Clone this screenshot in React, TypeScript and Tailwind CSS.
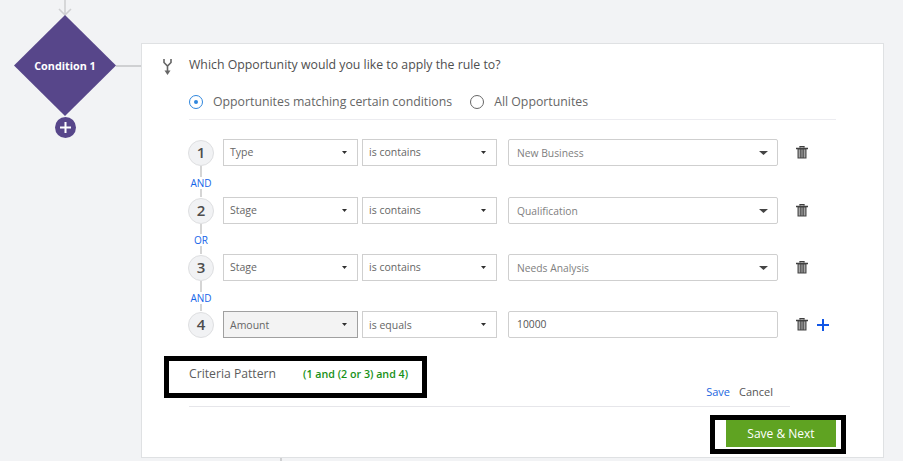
const font = "[font-family:'Open_Sans',sans-serif]";

function Caret({ w = 5, h = 3, fill = "#2f2f2f" }: { w?: number; h?: number; fill?: string }) {
  return (
    <svg width={w} height={h} viewBox="0 0 10 5" preserveAspectRatio="none" className="shrink-0">
      <path d="M0 0h10L5 5z" fill={fill} />
    </svg>
  );
}

function Trash() {
  return (
    <svg width="12" height="13" viewBox="0 0 12 13" className="shrink-0">
      <path d="M4 1.500V.5h4v1M0 2.500h12" stroke="#3f3f3f" strokeWidth="1.3" fill="none" />
      <path d="M1.500 2.500h9v10h-9z" fill="#444" />
      <path d="M2.600 3.500h1.700v8H2.600zM5.400 3.500h1.200v8H5.400zM7.700 3.500h1.700v8H7.700z" fill="#a6a6a6" />
    </svg>
  );
}

function Select({ text, active, low }: { text: string; active?: boolean; low?: boolean }) {
  return (
    <div
      className={`w-[135px] h-full border flex items-center justify-between pl-[6px] pr-[10px] text-[10.5px] text-[#666] ${
        active ? "bg-[#f3f3f3] border-[#a0a0a0]" : "bg-white border-[#cfcfcf]"
      }`}
    >
      <span className={low ? "pt-[2px]" : ""}>{text}</span>
      <Caret />
    </div>
  );
}

function Row({ n, field, op, value, active, plain, plus }: {
  n: number; field: string; op: string; value: string; active?: boolean; plain?: boolean; plus?: boolean;
}) {
  return (
    <div className="flex items-center h-[27px]">
      <div className="w-[26px] h-[26px] rounded-full bg-[#f1f2f4] border border-[#dedfe1] flex items-center justify-center text-[15px] font-semibold text-[#4d4d4d] shrink-0">
        {n}
      </div>
      <div className="ml-[9px] flex gap-[4px] h-full">
        <Select text={field} active={active} low={active} />
        <Select text={op} low={active} />
      </div>
      <div className={`ml-[11px] w-[270px] h-full border border-[#cfcfcf] rounded-[2px] flex items-center justify-between pl-[8px] pr-[9px] text-[10.3px] shrink-0 ${plain ? "text-[#555]" : "text-[#808080]"}`}>
        <span className={plain ? "" : "pt-[2px]"}>{value}</span>
        {!plain && <Caret w={9} h={4} fill="#444" />}
      </div>
      <div className="ml-[18px]"><Trash /></div>
      {plus && (
        <svg width="12" height="12" viewBox="0 0 12 12" className="ml-[9px]">
          <path d="M6 0v12M0 6h12" stroke="#1257e6" strokeWidth="2" />
        </svg>
      )}
    </div>
  );
}

function Joiner({ label, h, top }: { label: string; h: string; top: string }) {
  return (
    <div className={`w-[26px] ${h} flex flex-col items-center`}>
      <div className={`w-[2px] ${top} bg-[#d5d5d5]`} />
      <div className="text-[10px] leading-[12px] font-medium text-[#1565e8]">{label}</div>
      <div className="w-[2px] flex-1 bg-[#d5d5d5]" />
    </div>
  );
}

function Radio({ on }: { on?: boolean }) {
  return (
    <div className={`w-[14px] h-[14px] rounded-full border flex items-center justify-center bg-white shrink-0 ${on ? "border-[#2f86dd]" : "border-[#666]"}`}>
      {on && <div className="w-[4px] h-[4px] rounded-full bg-[#2f86dd]" />}
    </div>
  );
}

export default function App() {
  return (
    <div className={`${font} w-[903px] h-[461px] overflow-hidden bg-[#f2f3f5] flex`}>
      <div className="w-[141px] shrink-0 flex flex-col">
        <div className="ml-[14px] w-[127px] flex items-start">
          <div className="w-[102px] flex flex-col items-center">
            <svg width="14" height="16" viewBox="0 0 14 16" className="-mb-px">
              <path d="M7 0v15M1 9l6 6 6-6" stroke="#cfd0d2" strokeWidth="1.6" fill="none" />
            </svg>
            <div
              className="w-[102px] h-[101px] bg-[#57468a] flex items-center justify-center pt-[1px] text-white text-[10.8px] font-bold [clip-path:polygon(50%_0,100%_50%,50%_100%,0_50%)]"
            >
              Condition 1
            </div>
            <div className="mt-px w-[21px] h-[21px] rounded-full bg-[#57468a] flex items-center justify-center">
              <svg width="11" height="11" viewBox="0 0 11 11">
                <path d="M5.5 0v11M0 5.5h11" stroke="#fff" strokeWidth="2" />
              </svg>
            </div>
          </div>
          <div className="mt-[65px] h-[2px] w-[25px] bg-[#cfd0d2]" />
        </div>
      </div>

      <div className="flex flex-col shrink-0">
        <div className="mt-[43px] w-[743px] h-[415px] bg-white border border-[#dfe1e3] pt-[11px] pl-[20px] pr-[37px] flex flex-col shrink-0">
          <div className="flex items-center h-[20px]">
            <svg width="9" height="16" viewBox="0 0 9 16" className="ml-[1px] mr-[17px] mt-[4px] shrink-0">
              <path d="M1 0v3.500l3.500 3.500L8 3.500V0M4.500 7V12" stroke="#666" strokeWidth="1.600" fill="none" />
              <path d="M1.500 11.500h6l-3 4.500z" fill="#666" />
            </svg>
            <span className="text-[12.3px] text-[#4f4f4f] font-medium">Which Opportunity would you like to apply the rule to?</span>
          </div>

          <div className="ml-[27px] mt-[17px] w-[647px] h-[28px] border-b border-[#ececf0] flex items-start">
            <div className="flex items-center h-[20px]">
              <Radio on />
              <span className="ml-[10px] text-[12.3px] font-medium text-[#666]">Opportunites matching certain conditions</span>
              <div className="ml-[18px]"><Radio /></div>
              <span className="ml-[10px] text-[12.3px] font-medium text-[#666]">All Opportunites</span>
            </div>
          </div>

          <div className="ml-[26px] mt-[19px] flex flex-col">
            <Row n={1} field="Type" op="is contains" value="New Business" />
            <Joiner label="AND" h="h-[31px]" top="h-[11px]" />
            <Row n={2} field="Stage" op="is contains" value="Qualification" />
            <Joiner label="OR" h="h-[30px]" top="h-[10px]" />
            <Row n={3} field="Stage" op="is contains" value="Needs Analysis" />
            <Joiner label="AND" h="h-[30px]" top="h-[11px]" />
            <Row n={4} field="Amount" op="is equals" value="10000" active plain plus />
          </div>

          <div className="ml-[27px] mt-[18px] w-[601px] h-[51px] border-b border-[#e6e6ea] flex items-start justify-between">
            <div className="-ml-[25px] w-[263px] h-[42px] border-[5px] border-black flex items-center pl-[20px] pb-[6px]">
              <span className="text-[12.2px] font-medium text-[#5c5c5c]">Criteria Pattern</span>
              <span className="ml-[27px] text-[10.7px] font-semibold text-[#179117]">(1 and (2 or 3) and 4)</span>
            </div>
            <div className="mt-[28px] mr-[17px] flex gap-[9px] text-[11px]">
              <span className="text-[#1a66e0]">Save</span>
              <span className="text-[#555]">Cancel</span>
            </div>
          </div>

          <div className="mt-[8px] self-end w-[136px] h-[39px] border-[5px] border-black pl-[11px] pr-[5px] pb-[2px]">
            <div className="h-full bg-[#5fa322] text-white text-[12px] font-medium flex items-center justify-center">
              Save &amp; Next
            </div>
          </div>
        </div>
        <div className="ml-[139px] w-[2px] h-[3px] bg-[#cfd0d2]" />
      </div>
    </div>
  );
}
